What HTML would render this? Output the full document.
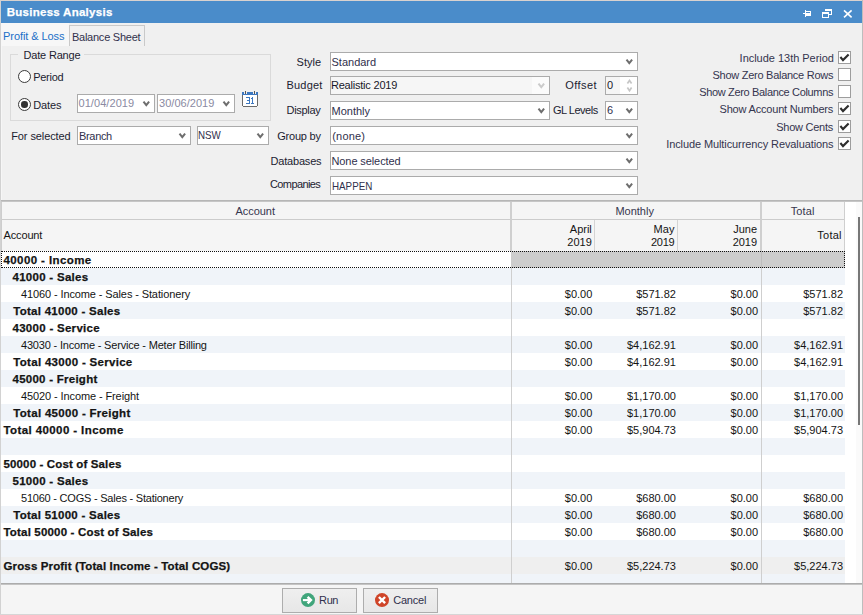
<!DOCTYPE html>
<html><head><meta charset="utf-8">
<style>
*{box-sizing:border-box;margin:0;padding:0}
html,body{width:863px;height:615px;overflow:hidden;background:#f0f0f0;font-family:"Liberation Sans",sans-serif;font-size:11px;color:#1e1e2e}
.a{position:absolute}
.t{position:absolute;white-space:nowrap;line-height:13px}
.t[style*="font-weight:bold;font-size:11.5px"]{-webkit-text-stroke:0.25px currentColor}
.combo{position:absolute;background:#fff;border:1px solid #ababab;height:19px}
.chev{position:absolute;right:4px;top:6px}
.chk{position:absolute;left:838px;width:13px;height:13px;border:1px solid #9d9d9d;background:#fff}
.radio{position:absolute;width:13px;height:13px;border-radius:50%;border:1.2px solid #3a3a3a;background:#fff}
.btn{position:absolute;top:588px;width:75px;height:25px;border:1px solid #adadad;background:linear-gradient(#efefef,#e7e7e7)}
</style></head><body>
<!-- frame -->
<div class="a" style="left:0;top:0;width:863px;height:1px;background:#d9d2cf"></div>
<div class="a" style="left:0;top:0;width:1px;height:615px;background:#d2d2d2"></div>
<div class="a" style="left:1px;top:23px;width:1px;height:177px;background:#f6f6f6"></div>
<div class="a" style="left:862px;top:0;width:1px;height:615px;background:#bdbdbd"></div>
<div class="a" style="left:1px;top:1px;width:861px;height:22px;background:#4a8cca"></div>
<svg class="a" style="left:802px;top:9px" width="10" height="9" viewBox="0 0 10 9" shape-rendering="crispEdges">
<rect x="1" y="4" width="3" height="1" fill="#fff"/>
<rect x="3" y="1" width="1" height="7" fill="#fff"/>
<rect x="4" y="2" width="5" height="5" fill="#fff"/>
<rect x="4" y="3" width="4" height="1" fill="#4a8cca"/>
</svg>
<svg class="a" style="left:822px;top:9px" width="10" height="9" viewBox="0 0 10 9" shape-rendering="crispEdges">
<rect x="3" y="0" width="7" height="2" fill="#fff"/>
<rect x="9" y="2" width="1" height="4" fill="#fff"/>
<rect x="7" y="5" width="2" height="1" fill="#fff"/>
<rect x="0" y="3" width="7" height="2" fill="#fff"/>
<rect x="0" y="5" width="1" height="4" fill="#fff"/>
<rect x="6" y="5" width="1" height="4" fill="#fff"/>
<rect x="0" y="8" width="7" height="1" fill="#fff"/>
</svg>
<svg class="a" style="left:843px;top:9px" width="10" height="9" viewBox="0 0 10 9">
<path d="M1 1.3L8.6 8.3M8.6 1.3L1 8.3" stroke="#fff" stroke-width="1.6" fill="none"/>
</svg>
<!-- tabs -->
<div class="a" style="left:1px;top:23px;width:68px;height:23px;background:#f7f7f7"></div>
<div class="a" style="left:69px;top:25px;width:76px;height:21px;border:1px solid #c9c9c9;border-bottom:none;background:#f0f0f0"></div>

<!-- date range group -->
<div class="a" style="left:10px;top:54px;width:261px;height:67px;border:1px solid #dadada"></div>
<div class="a" style="left:18px;top:50px;width:66px;height:10px;background:#f0f0f0"></div>
<div class="radio" style="left:18px;top:70px"></div>
<div class="radio" style="left:18px;top:98px"><div class="a" style="left:2.3px;top:2.3px;width:6.5px;height:6.5px;border-radius:50%;background:#333"></div></div>
<div class="combo" style="left:77px;top:94px;width:78px"><svg class="chev" width="8" height="6" viewBox="0 0 8 6"><path d="M1.5 0.6L4.3 4.1L7.1 0.6" stroke="#6e6e6e" stroke-width="2" fill="none"/></svg></div>
<div class="combo" style="left:157px;top:94px;width:78px"><svg class="chev" width="8" height="6" viewBox="0 0 8 6"><path d="M1.5 0.6L4.3 4.1L7.1 0.6" stroke="#6e6e6e" stroke-width="2" fill="none"/></svg></div>
<svg class="a" style="left:242px;top:91px" width="16" height="16" viewBox="0 0 16 16" shape-rendering="crispEdges">
<rect x="1" y="4" width="14" height="11" fill="#fff"/>
<rect x="0" y="4" width="1" height="11" fill="#6a6a6a"/>
<rect x="15" y="4" width="1" height="11" fill="#6a6a6a"/>
<rect x="1" y="15" width="14" height="1" fill="#6a6a6a"/>
<rect x="0" y="3" width="16" height="1" fill="#3d78c0"/>
<rect x="0" y="1" width="2" height="2" fill="#3d78c0"/>
<rect x="5" y="1" width="6" height="2" fill="#3d78c0"/>
<rect x="14" y="1" width="2" height="2" fill="#3d78c0"/>
<rect x="3" y="0" width="1" height="3" fill="#555"/>
<rect x="12" y="0" width="1" height="3" fill="#555"/>
<rect x="4" y="6" width="4" height="1" fill="#3d78c0"/>
<rect x="5" y="9" width="3" height="1" fill="#3d78c0"/>
<rect x="4" y="12" width="4" height="1" fill="#3d78c0"/>
<rect x="7" y="6" width="1" height="7" fill="#3d78c0"/>
<rect x="10" y="6" width="1" height="7" fill="#3d78c0"/>
<rect x="9" y="12" width="3" height="1" fill="#3d78c0"/>
<rect x="9" y="7" width="1" height="1" fill="#3d78c0"/>
</svg>
<div class="combo" style="left:77px;top:126px;width:114px"><svg class="chev" width="8" height="6" viewBox="0 0 8 6"><path d="M1.5 0.6L4.3 4.1L7.1 0.6" stroke="#6e6e6e" stroke-width="2" fill="none"/></svg></div>
<div class="combo" style="left:197px;top:126px;width:72px"><svg class="chev" width="8" height="6" viewBox="0 0 8 6"><path d="M1.5 0.6L4.3 4.1L7.1 0.6" stroke="#6e6e6e" stroke-width="2" fill="none"/></svg></div>

<!-- middle combos -->
<div class="combo" style="left:330px;top:52px;width:308px"><svg class="chev" width="8" height="6" viewBox="0 0 8 6"><path d="M1.5 0.6L4.3 4.1L7.1 0.6" stroke="#6e6e6e" stroke-width="2" fill="none"/></svg></div>
<div class="combo" style="left:330px;top:76px;width:220px;background:#f6f6f6"><div class="a" style="left:201px;top:0;width:17px;height:17px;background:#fbfbfb"></div><svg class="chev" width="8" height="6" viewBox="0 0 8 6"><path d="M1.5 0.6L4.3 4.1L7.1 0.6" stroke="#cbcbcb" stroke-width="2" fill="none"/></svg></div>
<div class="combo" style="left:605px;top:76px;width:33px"><div class="a" style="left:0;top:0;width:14px;height:17px;background:#f5f5f5"></div>
<svg class="a" style="left:20px;top:2px" width="7" height="14" viewBox="0 0 7 14"><path d="M1.4 4.6L3.5 1.5L5.6 4.6M1.4 8.6L3.5 11.7L5.6 8.6" stroke="#c6c6c6" stroke-width="1.7" fill="none"/></svg></div>
<div class="combo" style="left:330px;top:101px;width:220px"><svg class="chev" width="8" height="6" viewBox="0 0 8 6"><path d="M1.5 0.6L4.3 4.1L7.1 0.6" stroke="#6e6e6e" stroke-width="2" fill="none"/></svg></div>
<div class="combo" style="left:605px;top:101px;width:33px"><svg class="chev" width="8" height="6" viewBox="0 0 8 6"><path d="M1.5 0.6L4.3 4.1L7.1 0.6" stroke="#6e6e6e" stroke-width="2" fill="none"/></svg></div>
<div class="combo" style="left:330px;top:126px;width:308px"><svg class="chev" width="8" height="6" viewBox="0 0 8 6"><path d="M1.5 0.6L4.3 4.1L7.1 0.6" stroke="#6e6e6e" stroke-width="2" fill="none"/></svg></div>
<div class="combo" style="left:330px;top:151px;width:308px"><svg class="chev" width="8" height="6" viewBox="0 0 8 6"><path d="M1.5 0.6L4.3 4.1L7.1 0.6" stroke="#6e6e6e" stroke-width="2" fill="none"/></svg></div>
<div class="combo" style="left:330px;top:176px;width:308px"><svg class="chev" width="8" height="6" viewBox="0 0 8 6"><path d="M1.5 0.6L4.3 4.1L7.1 0.6" stroke="#6e6e6e" stroke-width="2" fill="none"/></svg></div>

<!-- checkboxes -->
<div class="chk" style="top:51px"></div>
<div class="chk" style="top:68px"></div>
<div class="chk" style="top:85px"></div>
<div class="chk" style="top:102px"></div>
<div class="chk" style="top:120px"></div>
<div class="chk" style="top:137px"></div>
<svg class="a" style="left:838px;top:51px" width="13" height="100" viewBox="0 0 13 100">
<path d="M2.4 6L5 9.1L10.6 3.4" stroke="#2e2e2e" stroke-width="2.1" fill="none"/>
<path d="M2.4 57L5 60.1L10.6 54.4" stroke="#2e2e2e" stroke-width="2.1" fill="none"/>
<path d="M2.4 75L5 78.1L10.6 72.4" stroke="#2e2e2e" stroke-width="2.1" fill="none"/>
<path d="M2.4 92L5 95.1L10.6 89.4" stroke="#2e2e2e" stroke-width="2.1" fill="none"/>
</svg>

<!-- grid -->
<div class="a" style="left:1px;top:200px;width:861px;height:1px;background:#b6b6b6"></div>
<div class="a" style="left:1px;top:201px;width:861px;height:1px;background:#c6c6c6"></div>
<div class="a" style="left:1px;top:202px;width:861px;height:381px;background:#ffffff"></div>
<div class="a" style="left:1px;top:202px;width:1px;height:49px;background:#cdcdcd"></div>
<div class="a" style="left:856px;top:202px;width:6px;height:381px;background:#fafafa"></div>
<div class="a" style="left:2px;top:202px;width:843px;height:49px;background:#f5f5f5"></div>
<div class="a" style="left:2px;top:219px;width:843px;height:1px;background:#cccccc"></div>
<div class="a" style="left:510px;top:202px;width:2px;height:49px;background:#cfcfcf"></div>
<div class="a" style="left:594px;top:220px;width:1px;height:31px;background:#d4d4d4"></div>
<div class="a" style="left:677px;top:220px;width:1px;height:31px;background:#d4d4d4"></div>
<div class="a" style="left:760px;top:202px;width:2px;height:49px;background:#cfcfcf"></div>
<div class="a" style="left:844px;top:202px;width:1px;height:49px;background:#cfcfcf"></div>
<div class="a" style="left:1px;top:251px;width:844px;height:17px;background:#ffffff"></div>
<div class="a" style="left:511px;top:251px;width:334px;height:17px;background:#cdcdcd"></div><div class="a" style="left:761px;top:251px;width:1px;height:17px;background:#bdbdbd"></div>
<div class="a" style="left:1px;top:251px;width:844px;height:17px;border:1px dotted #111"></div>
<div class="a" style="left:1px;top:268px;width:844px;height:17px;background:#f0f4f9"></div>
<div class="a" style="left:1px;top:285px;width:844px;height:17px;background:#ffffff"></div>
<div class="a" style="left:1px;top:302px;width:844px;height:17px;background:#f0f4f9"></div>
<div class="a" style="left:1px;top:319px;width:844px;height:17px;background:#ffffff"></div>
<div class="a" style="left:1px;top:336px;width:844px;height:17px;background:#f0f4f9"></div>
<div class="a" style="left:1px;top:353px;width:844px;height:17px;background:#ffffff"></div>
<div class="a" style="left:1px;top:370px;width:844px;height:17px;background:#f0f4f9"></div>
<div class="a" style="left:1px;top:387px;width:844px;height:17px;background:#ffffff"></div>
<div class="a" style="left:1px;top:404px;width:844px;height:17px;background:#f0f4f9"></div>
<div class="a" style="left:1px;top:421px;width:844px;height:17px;background:#ffffff"></div>
<div class="a" style="left:1px;top:438px;width:844px;height:17px;background:#f0f4f9"></div>
<div class="a" style="left:1px;top:455px;width:844px;height:17px;background:#ffffff"></div>
<div class="a" style="left:1px;top:472px;width:844px;height:17px;background:#f0f4f9"></div>
<div class="a" style="left:1px;top:489px;width:844px;height:17px;background:#ffffff"></div>
<div class="a" style="left:1px;top:506px;width:844px;height:17px;background:#f0f4f9"></div>
<div class="a" style="left:1px;top:523px;width:844px;height:17px;background:#ffffff"></div>
<div class="a" style="left:1px;top:540px;width:844px;height:17px;background:#f0f4f9"></div>
<div class="a" style="left:1px;top:557px;width:844px;height:17px;background:#efefef"></div>
<div class="a" style="left:1px;top:574px;width:844px;height:9px;background:#f0f4f9"></div>
<div class="a" style="left:511px;top:268px;width:1px;height:315px;background:#cfcfcf"></div>
<div class="a" style="left:761px;top:268px;width:1px;height:315px;background:#cfcfcf"></div>
<div class="a" style="left:858px;top:217px;width:2px;height:208px;background:#777"></div>
<div class="a" style="left:1px;top:583px;width:861px;height:1px;background:#acacac"></div>
<div class="a" style="left:1px;top:584px;width:861px;height:1px;background:#c4c4c4"></div>
<div class="a" style="left:1px;top:585px;width:861px;height:29px;background:#f5f5f5"></div>
<div class="a" style="left:0px;top:614px;width:863px;height:1px;background:#d6d6d6"></div>

<!-- footer -->
<div class="btn" style="left:282px">
<svg class="a" style="left:18px;top:3.8px" width="15" height="15" viewBox="0 0 15 15"><circle cx="7" cy="7.1" r="7" fill="#40a57b"/><path d="M1.9 7.1H10" stroke="#fff" stroke-width="2.1" fill="none"/><path d="M6.6 3.8L9.9 7.1L6.6 10.4" stroke="#fff" stroke-width="2.5" fill="none" stroke-linejoin="miter"/></svg>
</div>
<div class="btn" style="left:363px">
<svg class="a" style="left:11px;top:3.8px" width="15" height="15" viewBox="0 0 15 15"><circle cx="7" cy="7.1" r="7" fill="#cf4428"/><path d="M3.9 4L10.1 10.2M10.1 4L3.9 10.2" stroke="#fff" stroke-width="2.4" fill="none"/></svg>
</div>
<div class="t" id="title" style="top:6px;color:#ffffff;font-weight:bold;font-size:11.5px;letter-spacing:0.275px;left:6.70px;">Business Analysis</div>
<div class="t" id="t_pl" style="top:30px;color:#1b70c8;letter-spacing:-0.083px;left:3.10px;">Profit &amp; Loss</div>
<div class="t" id="t_bs" style="top:31px;color:#30304c;letter-spacing:-0.233px;left:71.90px;">Balance Sheet</div>
<div class="t" id="l_dr" style="top:49px;color:#1c1c30;letter-spacing:-0.200px;left:23.60px;">Date Range</div>
<div class="t" id="l_per" style="top:71px;color:#1c1c30;letter-spacing:-0.280px;left:33.20px;">Period</div>
<div class="t" id="l_dat" style="top:99px;color:#1c1c30;letter-spacing:-0.100px;left:33.20px;">Dates</div>
<div class="t" id="l_fs" style="top:130px;color:#1c1c30;letter-spacing:-0.091px;left:11.20px;">For selected</div>
<div class="t" id="l_sty" style="top:56px;color:#1c1c30;letter-spacing:0.050px;left:296.50px;">Style</div>
<div class="t" id="l_bud" style="top:79px;color:#1c1c30;letter-spacing:0.200px;left:286.50px;">Budget</div>
<div class="t" id="l_dis" style="top:104px;color:#1c1c30;letter-spacing:-0.300px;left:286.50px;">Display</div>
<div class="t" id="l_grp" style="top:130px;color:#1c1c30;letter-spacing:-0.200px;left:277.20px;">Group by</div>
<div class="t" id="l_db" style="top:155px;color:#1c1c30;letter-spacing:-0.200px;left:270.60px;">Databases</div>
<div class="t" id="l_co" style="top:178px;color:#1c1c30;letter-spacing:-0.600px;left:270.00px;">Companies</div>
<div class="t" id="l_off" style="top:79px;color:#1c1c30;letter-spacing:0.440px;left:565.30px;">Offset</div>
<div class="t" id="l_gl" style="top:104px;color:#1c1c30;letter-spacing:-0.475px;left:552.90px;">GL Levels</div>
<div class="t" id="v_d1" style="top:97px;color:#8a8aa2;letter-spacing:0.067px;left:78.50px;">01/04/2019</div>
<div class="t" id="v_d2" style="top:97px;color:#8a8aa2;letter-spacing:0.022px;left:159.10px;">30/06/2019</div>
<div class="t" id="v_br" style="top:130px;color:#30304c;letter-spacing:-0.360px;left:79.10px;">Branch</div>
<div class="t" id="v_nsw" style="top:129px;color:#30304c;transform:scaleX(0.8880);transform-origin:0 0;left:197.90px;">NSW</div>
<div class="t" id="v_std" style="top:56px;color:#30304c;left:331.50px;">Standard</div>
<div class="t" id="v_bud" style="top:79px;color:#18182a;letter-spacing:-0.200px;left:330.90px;">Realistic 2019</div>
<div class="t" id="v_off" style="top:79px;color:#18182a;left:606.90px;">0</div>
<div class="t" id="v_mon" style="top:105px;color:#30304c;left:331.50px;">Monthly</div>
<div class="t" id="v_gl" style="top:104px;color:#30304c;left:607.00px;">6</div>
<div class="t" id="v_none" style="top:130px;color:#30304c;letter-spacing:0.160px;left:332.30px;">(none)</div>
<div class="t" id="v_db" style="top:155px;color:#30304c;letter-spacing:-0.100px;left:331.50px;">None selected</div>
<div class="t" id="v_co" style="top:180px;color:#30304c;transform:scaleX(0.8911);transform-origin:0 0;left:331.50px;">HAPPEN</div>
<div class="t" id="c_0" style="top:52px;color:#34344e;letter-spacing:-0.022px;left:739.60px;">Include 13th Period</div>
<div class="t" id="c_1" style="top:69px;color:#34344e;letter-spacing:-0.267px;left:712.50px;">Show Zero Balance Rows</div>
<div class="t" id="c_2" style="top:86px;color:#34344e;letter-spacing:-0.342px;left:699.20px;">Show Zero Balance Columns</div>
<div class="t" id="c_3" style="top:103px;color:#34344e;letter-spacing:-0.189px;left:719.50px;">Show Account Numbers</div>
<div class="t" id="c_4" style="top:121px;color:#34344e;letter-spacing:-0.244px;left:776.20px;">Show Cents</div>
<div class="t" id="c_5" style="top:138px;color:#34344e;letter-spacing:-0.097px;left:666.20px;">Include Multicurrency Revaluations</div>
<div class="t" id="h_acc" style="top:205px;color:#36364e;letter-spacing:-0.067px;left:235.60px;">Account</div>
<div class="t" id="h_mon" style="top:205px;color:#36364e;left:615.40px;">Monthly</div>
<div class="t" id="h_tot" style="top:205px;color:#36364e;letter-spacing:0.100px;left:790.70px;">Total</div>
<div class="t" id="h_acc2" style="top:229px;color:#141414;letter-spacing:-0.167px;left:3.60px;">Account</div>
<div class="t" id="h_apr" style="top:223px;color:#141414;right:271.20px;">April</div>
<div class="t" id="h_apr2" style="top:236px;color:#141414;right:271.20px;">2019</div>
<div class="t" id="h_may" style="top:223px;color:#141414;letter-spacing:0.100px;left:653.50px;">May</div>
<div class="t" id="h_may2" style="top:236px;color:#141414;letter-spacing:-0.267px;left:651.00px;">2019</div>
<div class="t" id="h_jun" style="top:223px;color:#141414;right:105.90px;">June</div>
<div class="t" id="h_jun2" style="top:236px;color:#141414;right:105.90px;">2019</div>
<div class="t" id="h_tot2" style="top:229px;color:#141414;letter-spacing:0.250px;left:817.30px;">Total</div>
<div class="t" id="b_run" style="top:594px;color:#30304c;letter-spacing:-0.400px;left:319.10px;">Run</div>
<div class="t" id="b_can" style="top:594px;color:#30304c;letter-spacing:-0.200px;left:393.20px;">Cancel</div>
<div class="t" id="r_0" style="top:254px;color:#141414;font-weight:bold;font-size:11.5px;letter-spacing:0.400px;left:3.50px;">40000 - Income</div>
<div class="t" id="r_1" style="top:271px;color:#141414;font-weight:bold;font-size:11.5px;letter-spacing:0.283px;left:12.50px;">41000 - Sales</div>
<div class="t" id="r_2" style="top:288px;color:#141414;letter-spacing:-0.112px;left:21.00px;">41060 - Income - Sales - Stationery</div>
<div class="t" id="v_2_0" style="top:288px;color:#141414;right:270.70px;">$0.00</div>
<div class="t" id="v_2_1" style="top:288px;color:#141414;right:187.10px;">$571.82</div>
<div class="t" id="v_2_2" style="top:288px;color:#141414;right:104.90px;">$0.00</div>
<div class="t" id="v_2_3" style="top:288px;color:#141414;right:20.00px;">$571.82</div>
<div class="t" id="r_3" style="top:305px;color:#141414;font-weight:bold;font-size:11.5px;letter-spacing:0.267px;left:13.30px;">Total 41000 - Sales</div>
<div class="t" id="v_3_0" style="top:305px;color:#141414;right:270.70px;">$0.00</div>
<div class="t" id="v_3_1" style="top:305px;color:#141414;right:187.10px;">$571.82</div>
<div class="t" id="v_3_2" style="top:305px;color:#141414;right:104.90px;">$0.00</div>
<div class="t" id="v_3_3" style="top:305px;color:#141414;right:20.00px;">$571.82</div>
<div class="t" id="r_4" style="top:322px;color:#141414;font-weight:bold;font-size:11.5px;letter-spacing:0.286px;left:12.50px;">43000 - Service</div>
<div class="t" id="r_5" style="top:339px;color:#141414;letter-spacing:-0.185px;left:21.00px;">43030 - Income - Service - Meter Billing</div>
<div class="t" id="v_5_0" style="top:339px;color:#141414;right:270.70px;">$0.00</div>
<div class="t" id="v_5_1" style="top:339px;color:#141414;right:187.10px;">$4,162.91</div>
<div class="t" id="v_5_2" style="top:339px;color:#141414;right:104.90px;">$0.00</div>
<div class="t" id="v_5_3" style="top:339px;color:#141414;right:20.00px;">$4,162.91</div>
<div class="t" id="r_6" style="top:356px;color:#141414;font-weight:bold;font-size:11.5px;letter-spacing:0.300px;left:13.30px;">Total 43000 - Service</div>
<div class="t" id="v_6_0" style="top:356px;color:#141414;right:270.70px;">$0.00</div>
<div class="t" id="v_6_1" style="top:356px;color:#141414;right:187.10px;">$4,162.91</div>
<div class="t" id="v_6_2" style="top:356px;color:#141414;right:104.90px;">$0.00</div>
<div class="t" id="v_6_3" style="top:356px;color:#141414;right:20.00px;">$4,162.91</div>
<div class="t" id="r_7" style="top:373px;color:#141414;font-weight:bold;font-size:11.5px;letter-spacing:0.257px;left:12.50px;">45000 - Freight</div>
<div class="t" id="r_8" style="top:390px;color:#141414;letter-spacing:-0.104px;left:21.00px;">45020 - Income - Freight</div>
<div class="t" id="v_8_0" style="top:390px;color:#141414;right:270.70px;">$0.00</div>
<div class="t" id="v_8_1" style="top:390px;color:#141414;right:187.10px;">$1,170.00</div>
<div class="t" id="v_8_2" style="top:390px;color:#141414;right:104.90px;">$0.00</div>
<div class="t" id="v_8_3" style="top:390px;color:#141414;right:20.00px;">$1,170.00</div>
<div class="t" id="r_9" style="top:407px;color:#141414;font-weight:bold;font-size:11.5px;letter-spacing:0.300px;left:13.30px;">Total 45000 - Freight</div>
<div class="t" id="v_9_0" style="top:407px;color:#141414;right:270.70px;">$0.00</div>
<div class="t" id="v_9_1" style="top:407px;color:#141414;right:187.10px;">$1,170.00</div>
<div class="t" id="v_9_2" style="top:407px;color:#141414;right:104.90px;">$0.00</div>
<div class="t" id="v_9_3" style="top:407px;color:#141414;right:20.00px;">$1,170.00</div>
<div class="t" id="r_10" style="top:424px;color:#141414;font-weight:bold;font-size:11.5px;letter-spacing:0.400px;left:3.50px;">Total 40000 - Income</div>
<div class="t" id="v_10_0" style="top:424px;color:#141414;right:270.70px;">$0.00</div>
<div class="t" id="v_10_1" style="top:424px;color:#141414;right:187.10px;">$5,904.73</div>
<div class="t" id="v_10_2" style="top:424px;color:#141414;right:104.90px;">$0.00</div>
<div class="t" id="v_10_3" style="top:424px;color:#141414;right:20.00px;">$5,904.73</div>
<div class="t" id="r_12" style="top:458px;color:#141414;font-weight:bold;font-size:11.5px;letter-spacing:0.140px;left:3.50px;">50000 - Cost of Sales</div>
<div class="t" id="r_13" style="top:475px;color:#141414;font-weight:bold;font-size:11.5px;letter-spacing:0.283px;left:12.50px;">51000 - Sales</div>
<div class="t" id="r_14" style="top:492px;color:#141414;letter-spacing:-0.219px;left:21.00px;">51060 - COGS - Sales - Stationery</div>
<div class="t" id="v_14_0" style="top:492px;color:#141414;right:270.70px;">$0.00</div>
<div class="t" id="v_14_1" style="top:492px;color:#141414;right:187.10px;">$680.00</div>
<div class="t" id="v_14_2" style="top:492px;color:#141414;right:104.90px;">$0.00</div>
<div class="t" id="v_14_3" style="top:492px;color:#141414;right:20.00px;">$680.00</div>
<div class="t" id="r_15" style="top:509px;color:#141414;font-weight:bold;font-size:11.5px;letter-spacing:0.267px;left:13.30px;">Total 51000 - Sales</div>
<div class="t" id="v_15_0" style="top:509px;color:#141414;right:270.70px;">$0.00</div>
<div class="t" id="v_15_1" style="top:509px;color:#141414;right:187.10px;">$680.00</div>
<div class="t" id="v_15_2" style="top:509px;color:#141414;right:104.90px;">$0.00</div>
<div class="t" id="v_15_3" style="top:509px;color:#141414;right:20.00px;">$680.00</div>
<div class="t" id="r_16" style="top:526px;color:#141414;font-weight:bold;font-size:11.5px;letter-spacing:0.177px;left:3.50px;">Total 50000 - Cost of Sales</div>
<div class="t" id="v_16_0" style="top:526px;color:#141414;right:270.70px;">$0.00</div>
<div class="t" id="v_16_1" style="top:526px;color:#141414;right:187.10px;">$680.00</div>
<div class="t" id="v_16_2" style="top:526px;color:#141414;right:104.90px;">$0.00</div>
<div class="t" id="v_16_3" style="top:526px;color:#141414;right:20.00px;">$680.00</div>
<div class="t" id="r_18" style="top:560px;color:#141414;font-weight:bold;font-size:11.5px;letter-spacing:0.138px;left:3.50px;">Gross Profit (Total Income - Total COGS)</div>
<div class="t" id="v_18_0" style="top:560px;color:#141414;right:270.70px;">$0.00</div>
<div class="t" id="v_18_1" style="top:560px;color:#141414;right:187.10px;">$5,224.73</div>
<div class="t" id="v_18_2" style="top:560px;color:#141414;right:104.90px;">$0.00</div>
<div class="t" id="v_18_3" style="top:560px;color:#141414;right:20.00px;">$5,224.73</div>
</body></html>
